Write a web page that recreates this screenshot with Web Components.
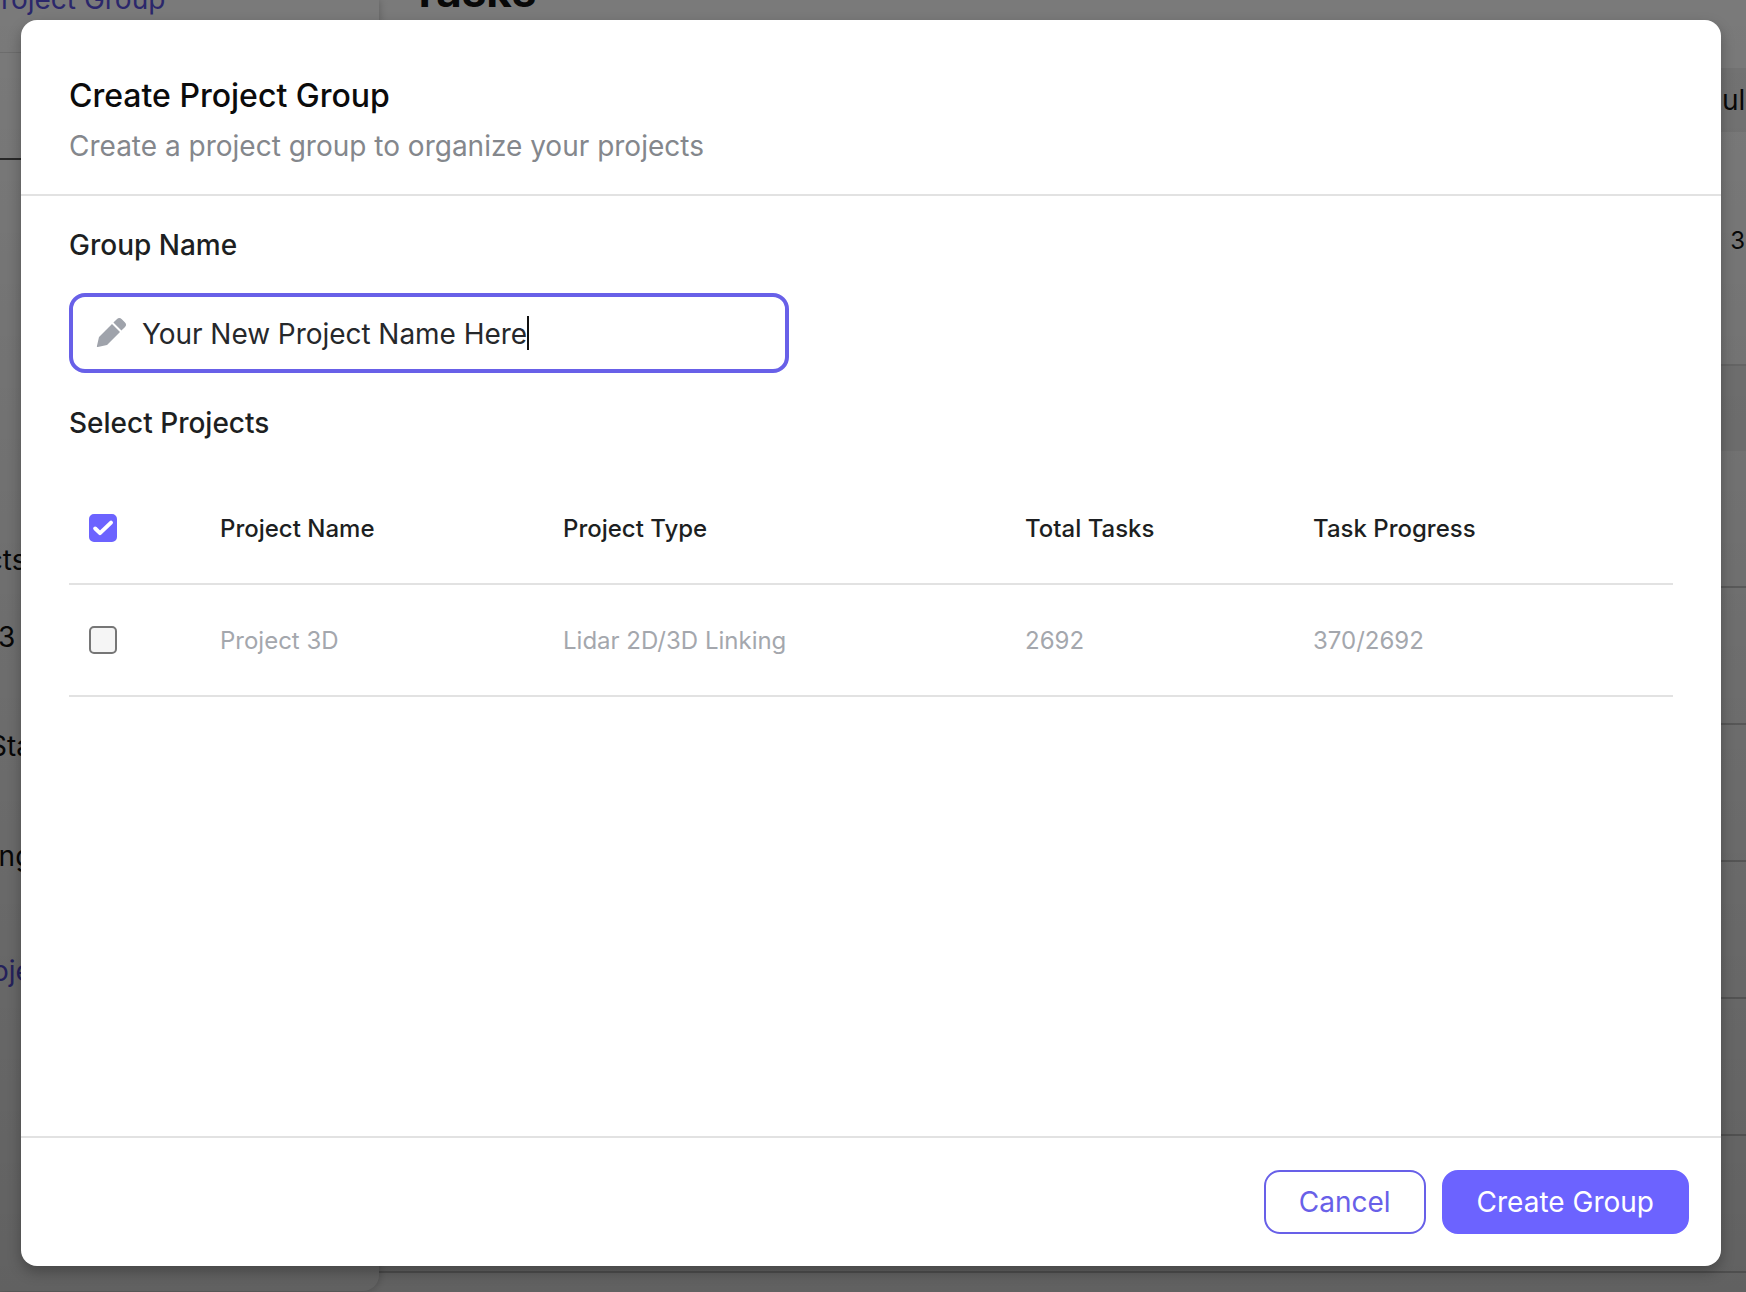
<!DOCTYPE html>
<html>
<head>
<meta charset="utf-8">
<title>Create Project Group</title>
<style>
  html, body { margin: 0; height: 100%; overflow: hidden; background: #fff; }
  body { font-family: Inter, "Liberation Sans", sans-serif; }
</style>
</head>
<body>
<app-backdrop></app-backdrop>
<group-dialog heading="Create Project Group" subheading="Create a project group to organize your projects">
  <field-label>Group Name</field-label>
  <text-field value="Your New Project Name Here"></text-field>
  <field-label class="second">Select Projects</field-label>
  <project-table></project-table>
  <dialog-button slot="actions" kind="outline">Cancel</dialog-button>
  <dialog-button slot="actions" kind="solid">Create Group</dialog-button>
</group-dialog>

<script>
class AppBackdrop extends HTMLElement {
  constructor() {
    super()
    this.attachShadow({ mode: "open" }).innerHTML = /*html*/ `
      <style>
        :host {
          display: flex;
          width: 1746px;
          height: 1292px;
          overflow: hidden;
          position: relative;
          color: #111;
          font-family: Inter, "Liberation Sans", sans-serif;
        }
        :host::after {
          content: "";
          position: absolute;
          inset: 0;
          background: linear-gradient(180deg, rgba(0,0,0,.52), rgba(0,0,0,.62));
        }
        .sidebar {
          width: 379px;
          height: 1291px;
          flex: none;
          box-sizing: border-box;
          border-bottom-right-radius: 16px;
          box-shadow: 0 0 8px rgba(0,0,0,.25);
          background: #fff;
          font-size: 28px;
          display: flex;
          flex-direction: column;
          position: relative;
          z-index: 0;
        }
        .link { color: #5a52e0; }
        .top { height: 160px; border-bottom: 2px solid #555; box-sizing: border-box; }
        .top .link { margin-left: -17px; line-height: 34px; display: block; margin-top: -18px; height: 70px; border-bottom: 1px solid #e4e4e4; white-space: nowrap; }
        .row { height: 34px; line-height: 34px; white-space: nowrap; }
        .main { flex: 1; min-width: 0; display: flex; flex-direction: column; }
        .main h1 {
          margin: -36px 0 0 31px;
          height: 104px;
          font-size: 44px;
          line-height: 54px;
          font-weight: 700;
        }
        .band { background: #f0f0f0; height: 64px; line-height: 64px; font-size: 28px; text-align: right; margin-right: -6px; }
        .cell { height: 234px; line-height: 218px; font-size: 24px; text-align: right; padding-right: 1px; border-bottom: 2px solid #ddd; box-sizing: border-box; }
        .shade { background: #f2f2f2; height: 85px; }
        .line { height: 137px; box-sizing: border-box; border-bottom: 2px solid #ccc; }
      </style>
      <aside class="sidebar">
        <div class="top"><span class="link">Project Group</span></div>
        <div class="row" style="margin-top:383px;margin-left:-81px">Projects</div>
        <div class="row" style="margin-top:43px;margin-left:-2px">3</div>
        <div class="row" style="margin-top:75px;margin-left:-11px">Status</div>
        <div class="row" style="margin-top:76px;margin-left:-80px">Labeling</div>
        <div class="row link" style="margin-top:81px;margin-left:-36px">Projects</div>
      </aside>
      <section class="main">
        <h1>Tasks</h1>
        <div class="band">Annotations Null</div>
        <div class="cell">3</div>
        <div class="shade"></div>
        <div class="line"></div>
        <div class="line"></div>
        <div class="line"></div>
        <div class="line"></div>
        <div class="line"></div>
        <div class="line"></div>
      </section>
    `
  }
}

class GroupDialog extends HTMLElement {
  constructor() {
    super()
    this.attachShadow({ mode: "open" }).innerHTML = /*html*/ `
      <style>
        :host {
          position: absolute;
          left: 21px;
          top: 20px;
          width: 1700px;
          height: 1246px;
          display: flex;
          flex-direction: column;
          box-sizing: border-box;
          background: #fff;
          border-radius: 16px;
          box-shadow: 0 6px 14px rgba(0,0,0,.28);
          font-family: Inter, "Liberation Sans", sans-serif;
        }
        header {
          height: 176px;
          box-sizing: border-box;
          padding: 56px 48px 0;
          border-bottom: 2px solid #e2e2e2;
        }
        h2 {
          margin: 0;
          font-size: 32px;
          line-height: 40px;
          font-weight: 500;
          color: #0b0b0b;
        }
        p {
          margin: 10px 0 0;
          font-size: 28px;
          line-height: 40px;
          color: #84878c;
        }
        .body { flex: 1; padding: 0 48px; }
        footer {
          height: 130px;
          box-sizing: border-box;
          border-top: 2px solid #e2e2e2;
          padding: 32px 32px 0;
          display: flex;
          justify-content: flex-end;
          align-items: flex-start;
          gap: 16px;
        }
      </style>
      <header>
        <h2></h2>
        <p></p>
      </header>
      <div class="body"><slot></slot></div>
      <footer><slot name="actions"></slot></footer>
    `
  }

  connectedCallback() {
    this.shadowRoot.querySelector("h2").textContent = this.getAttribute("heading")
    this.shadowRoot.querySelector("p").textContent = this.getAttribute("subheading")
  }
}

class FieldLabel extends HTMLElement {
  constructor() {
    super()
    this.attachShadow({ mode: "open" }).innerHTML = /*html*/ `
      <style>
        :host {
          display: block;
          padding-top: 29px;
          font-size: 28px;
          line-height: 40px;
          font-weight: 500;
          color: #1d1f22;
        }
        :host(.second) { padding-top: 30px; }
      </style>
      <slot></slot>
    `
  }
}

class TextField extends HTMLElement {
  constructor() {
    super()
    this.attachShadow({ mode: "open" }).innerHTML = /*html*/ `
      <style>
        :host {
          display: flex;
          align-items: center;
          gap: 15px;
          box-sizing: border-box;
          width: 720px;
          height: 80px;
          margin-top: 28px;
          padding-left: 22px;
          border: 4px solid #6860e8;
          border-radius: 16px;
          font-size: 28px;
          color: #26282b;
        }
        svg { flex: none; width: 32px; height: 32px; }
        .value { letter-spacing: -.05px; }
        .caret { display: inline-block; width: 2px; height: 34px; background: #111; vertical-align: -6px; }
      </style>
      <svg viewBox="0 0 32 32"><path fill="#9fa3ab" d="M4 20L17 7l8 8-13 13-9.2 2.1c-.6.1-1-.3-.9-.9zM18.4 5.6l3.4-3.4a3.5 3.5 0 0 1 5 0l3 3a3.5 3.5 0 0 1 0 5l-3.4 3.4z"/></svg>
      <span class="value"></span>
    `
  }

  connectedCallback() {
    const value = this.shadowRoot.querySelector(".value")
    value.innerHTML = `${this.getAttribute("value")}<span class="caret"></span>`
  }
}

class CheckBox extends HTMLElement {
  constructor() {
    super()
    this.attachShadow({ mode: "open" }).innerHTML = /*html*/ `
      <style>
        :host {
          display: flex;
          align-items: center;
          justify-content: center;
          box-sizing: border-box;
          width: 28px;
          height: 28px;
          border-radius: 5px;
          border: 2px solid #767676;
          background: #f5f5f5;
        }
        :host([checked]) { border-color: #6c63ff; background: #6c63ff; }
        svg { display: none; width: 24px; height: 24px; }
        :host([checked]) svg { display: block; }
      </style>
      <svg viewBox="0 0 24 24"><path d="M4.2 12.5l4.8 4.6L20 6.6" fill="none" stroke="#fff" stroke-width="4" stroke-linecap="round" stroke-linejoin="round"/></svg>
    `
  }
}

class ProjectTable extends HTMLElement {
  constructor() {
    super()
    this.attachShadow({ mode: "open" }).innerHTML = /*html*/ `
      <style>
        :host {
          display: block;
          margin-top: 30px;
          font-size: 24px;
        }
        .row {
          display: grid;
          grid-template-columns: 151px 343px 462px 288px 1fr;
          align-items: center;
          height: 112px;
          box-sizing: border-box;
          border-bottom: 2px solid #e2e2e2;
          color: #a4a7ad;
        }
        .row.head { font-weight: 500; color: #1d1f22; }
        .row check-box { margin-left: 20px; }
      </style>
      <div class="row head">
        <check-box checked></check-box>
        <span>Project Name</span>
        <span>Project Type</span>
        <span>Total Tasks</span>
        <span>Task Progress</span>
      </div>
      <div class="row">
        <check-box></check-box>
        <span>Project 3D</span>
        <span>Lidar 2D/3D Linking</span>
        <span>2692</span>
        <span>370/2692</span>
      </div>
    `
  }
}

class DialogButton extends HTMLElement {
  constructor() {
    super()
    this.attachShadow({ mode: "open" }).innerHTML = /*html*/ `
      <style>
        :host {
          display: inline-flex;
          align-items: center;
          justify-content: center;
          box-sizing: border-box;
          height: 64px;
          padding: 0 33px;
          border-radius: 16px;
          border: 2px solid #6860e8;
          font-size: 28px;
          color: #6860e8;
          background: #fff;
        }
        :host([kind="solid"]) {
          background: #6c63ff;
          border-color: #6c63ff;
          color: #fff;
        }
      </style>
      <slot></slot>
    `
  }
}

customElements.define("app-backdrop", AppBackdrop)
customElements.define("group-dialog", GroupDialog)
customElements.define("field-label", FieldLabel)
customElements.define("text-field", TextField)
customElements.define("check-box", CheckBox)
customElements.define("project-table", ProjectTable)
customElements.define("dialog-button", DialogButton)
</script>
</body>
</html>
